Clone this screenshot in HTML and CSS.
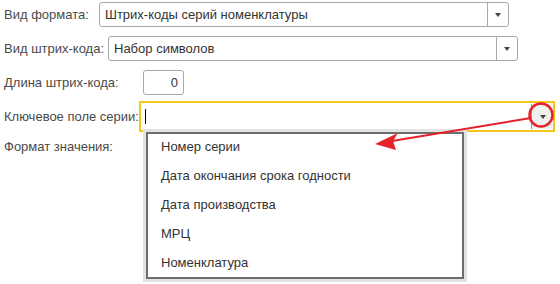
FILE: index.html
```html
<!DOCTYPE html>
<html lang="ru">
<head>
<meta charset="utf-8">
<link rel="stylesheet" href="styles.css">
</head>
<body>
<div class="form">
  <div class="row r1">
    <span class="label l1">Вид формата:</span>
    <div class="field w410"><span class="val">Штрих-коды серий номенклатуры</span><span class="btn"><i class="tri"></i></span></div>
  </div>
  <div class="row r2">
    <span class="label l2">Вид штрих-кода:</span>
    <div class="field w410"><span class="val">Набор символов</span><span class="btn"><i class="tri"></i></span></div>
  </div>
  <div class="row r3">
    <span class="label l3">Длина штрих-кода:</span>
    <div class="field num"><span class="val">0</span></div>
  </div>
  <div class="row r4">
    <span class="label l4">Ключевое поле серии:</span>
    <div class="field active"><span class="val"><i class="caret"></i></span><span class="btn hl"><i class="tri"></i></span></div>
  </div>
  <div class="row r5">
    <span class="label">Формат значения:</span>
  </div>

  <ul class="menu">
    <li>Номер серии</li>
    <li>Дата окончания срока годности</li>
    <li>Дата производства</li>
    <li>МРЦ</li>
    <li>Номенклатура</li>
  </ul>

  <svg class="annot" width="560" height="284" viewBox="0 0 560 284">
    <line x1="531" y1="118" x2="392" y2="141" stroke="#e52229" stroke-width="2"/>
    <polygon points="375,144 398,133 393,141 396,150" fill="#e52229"/>
    <circle cx="541" cy="115" r="11.5" fill="none" stroke="#e52229" stroke-width="2.5"/>
  </svg>
</div>
</body>
</html>
```

FILE: styles.css
```css
* { box-sizing: border-box; }
html, body { margin: 0; padding: 0; background: #fff; }
body {
  width: 560px; height: 284px; overflow: hidden;
  font-family: "Liberation Sans", Arial, sans-serif;
  font-size: 13px; color: #4a4a4a;
}
.form { position: relative; padding: 2px 0 0 4px; height: 284px; }
.row { display: flex; align-items: center; }
.r1 { height: 25px; }
.r2 { height: 25px; margin-top: 9px; }
.r3 { height: 25px; margin-top: 9px; }
.r4 { height: 31px; margin-top: 6px; }
.r5 { height: 16px; margin-top: 6px; }
.label { white-space: nowrap; }
.l1 { width: 95px; }
.l2 { width: 104px; }
.l3 { width: 139px; }
.l4 { width: 135px; }
.field {
  display: flex; align-items: stretch; height: 25px;
  border: 1px solid #a8a8a8; border-radius: 3px; background: #fff;
  color: #333;
}
.w410 { width: 410px; }
.val { flex: 1; padding-left: 5px; display: flex; align-items: center; white-space: nowrap; }
.btn { width: 21px; border-left: 1px solid #a8a8a8; display: flex; align-items: center; justify-content: center; }
.tri { width: 0; height: 0; border-left: 3.5px solid transparent; border-right: 3.5px solid transparent; border-top: 4px solid #444; }
.num { width: 41px; }
.num .val { justify-content: flex-end; padding-right: 5px; }
.active {
  width: 416px; height: 31px; border: 2px solid #f5c518; border-radius: 0;
  padding: 1px 0;
}
.active .btn { width: 22px; border-left: 1px solid #999; background: #f0f0f0; margin-right: 0; }
.active .val { padding-left: 4px; }
.caret { width: 1px; height: 15px; background: #000; }
.menu {
  position: absolute; left: 146px; top: 132px; width: 318px; height: 147px;
  margin: 0; padding: 0; list-style: none;
  border: 2px solid #6e6e6e; background: #fff;
  box-shadow: 0 0 0 3px #e3e3e3;
  color: #333;
}
.menu li { height: 29px; line-height: 26px; padding-left: 13px; white-space: nowrap; }
.annot { position: absolute; left: 0; top: 0; pointer-events: none; }
```
